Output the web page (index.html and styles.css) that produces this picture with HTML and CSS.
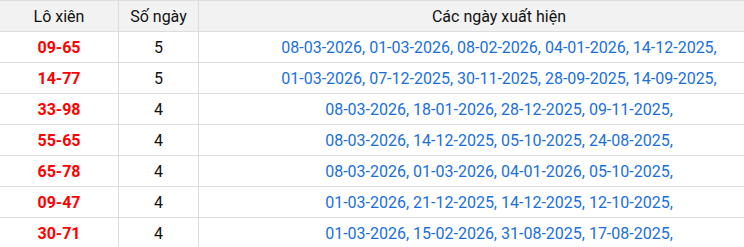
FILE: index.html
```html
<!DOCTYPE html>
<html lang="vi">
<head>
<meta charset="utf-8">
<link rel="stylesheet" href="styles.css">
</head>
<body>
<table class="xien">
  <thead>
    <tr><th class="c1">Lô xiên</th><th class="c2">Số ngày</th><th class="c3">Các ngày xuất hiện</th></tr>
  </thead>
  <tbody>
    <tr><td class="pair">09-65</td><td>5</td><td class="dates">08-03-2026, 01-03-2026, 08-02-2026, 04-01-2026, 14-12-2025,</td></tr>
    <tr><td class="pair">14-77</td><td>5</td><td class="dates">01-03-2026, 07-12-2025, 30-11-2025, 28-09-2025, 14-09-2025,</td></tr>
    <tr><td class="pair">33-98</td><td>4</td><td class="dates">08-03-2026, 18-01-2026, 28-12-2025, 09-11-2025,</td></tr>
    <tr><td class="pair">55-65</td><td>4</td><td class="dates">08-03-2026, 14-12-2025, 05-10-2025, 24-08-2025,</td></tr>
    <tr><td class="pair">65-78</td><td>4</td><td class="dates">08-03-2026, 01-03-2026, 04-01-2026, 05-10-2025,</td></tr>
    <tr><td class="pair">09-47</td><td>4</td><td class="dates">01-03-2026, 21-12-2025, 14-12-2025, 12-10-2025,</td></tr>
    <tr><td class="pair">30-71</td><td>4</td><td class="dates">01-03-2026, 15-02-2026, 31-08-2025, 17-08-2025,</td></tr>
  </tbody>
</table>
</body>
</html>
```

FILE: styles.css
```css
html, body {
  margin: 0;
  padding: 0;
  background: #fff;
}
body {
  font-family: Roboto, "Liberation Sans", sans-serif;
  font-size: 16px;
  color: #111;
  overflow: hidden;
}
.xien {
  border-collapse: collapse;
  table-layout: fixed;
  width: 744px;
}
.xien th, .xien td {
  border: 1px solid #dddddd;
  height: 30px;
  padding: 0 4px;
  text-align: center;
  vertical-align: middle;
  line-height: 19px;
  white-space: nowrap;
}
.xien tr > :first-child {
  border-left: none;
}
.xien tr > :last-child {
  border-right: none;
  padding-left: 55px;
  padding-right: 0;
}
.xien th {
  background: #f2f2f2;
  font-weight: normal;
  color: #111;
}
.c1 { width: 110px; }
.c2 { width: 71px; }
.pair {
  color: #ff0000;
  font-weight: bold;
}
.dates {
  color: #1a6fdc;
}
```
